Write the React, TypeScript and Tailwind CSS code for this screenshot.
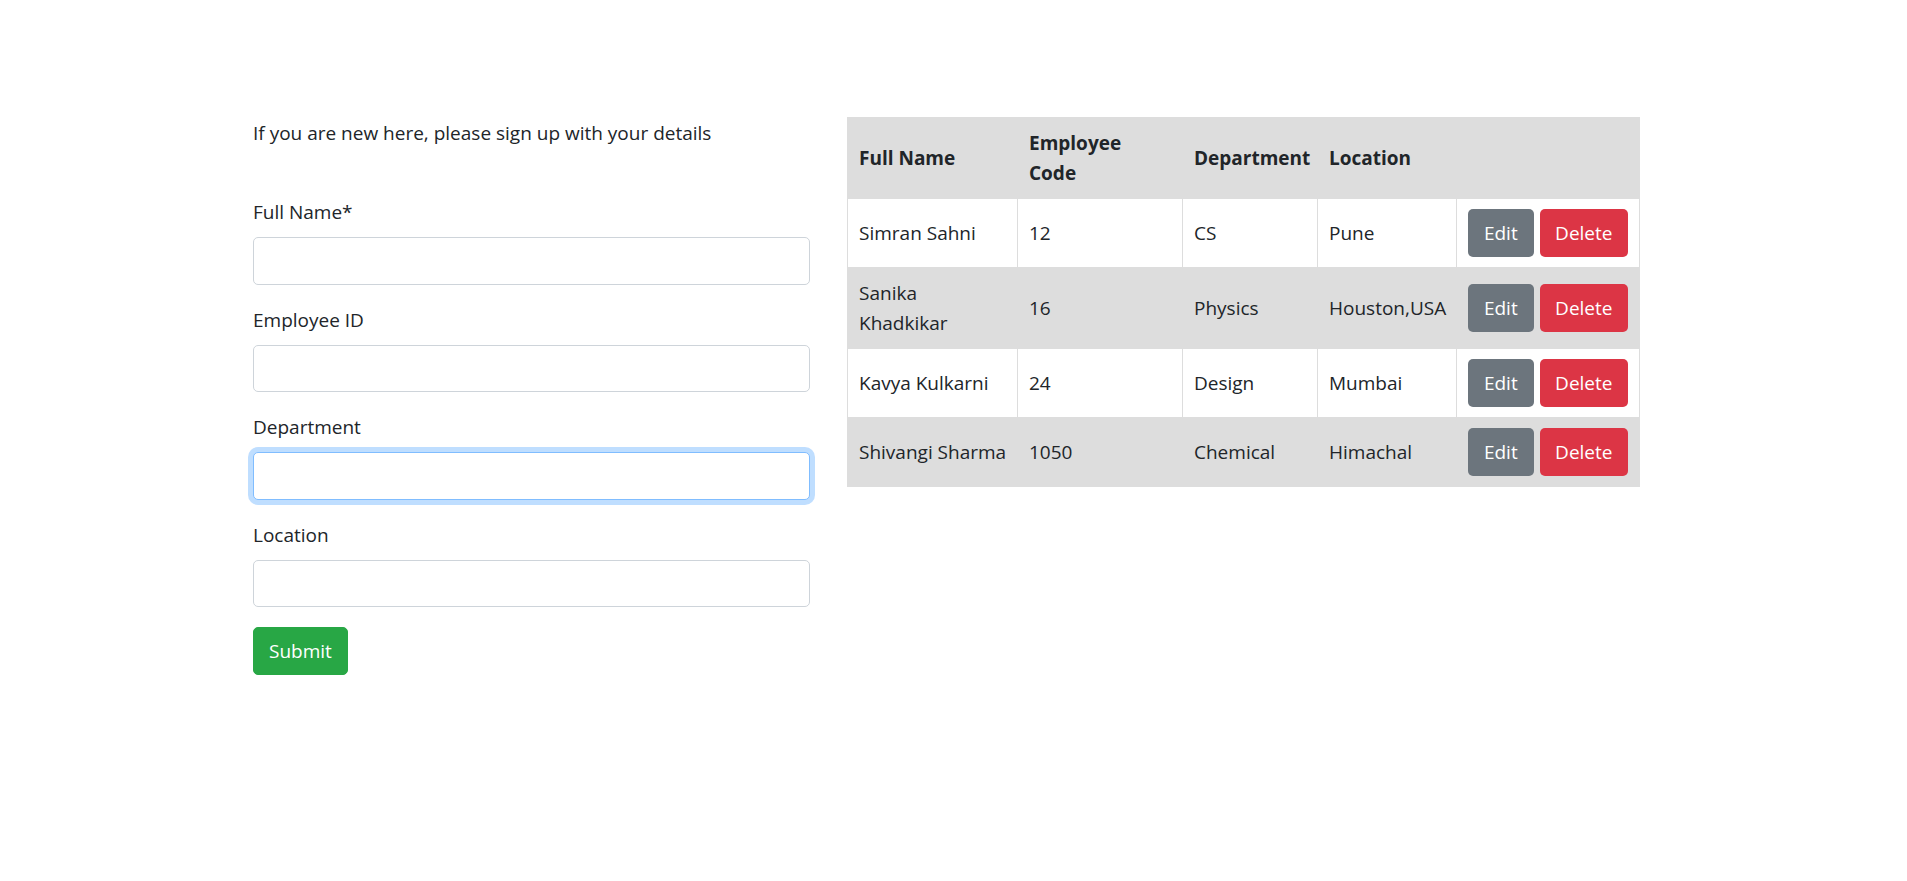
import React from "react";

const rows = [
  { name: "Simran Sahni", code: "12", dept: "CS", loc: "Pune", wrap: false },
  { name: "Sanika Khadkikar", code: "16", dept: "Physics", loc: "Houston,USA", wrap: true },
  { name: "Kavya Kulkarni", code: "24", dept: "Design", loc: "Mumbai", wrap: false },
  { name: "Shivangi Sharma", code: "1050", dept: "Chemical", loc: "Himachal", wrap: false },
];

function Field({ label, focused }: { label: string; focused?: boolean }) {
  return (
    <div className="mb-[20px]">
      <label className="block mb-[10px] leading-[30px]">{label}</label>
      <input
        className={
          focused
            ? "block w-full h-[47.5px] rounded-[5px] border border-[#80bdff] bg-white outline-none shadow-[0_0_0_5px_rgba(0,123,255,0.25)]"
            : "block w-full h-[47.5px] rounded-[5px] border border-[#ced4da] bg-white outline-none"
        }
      />
    </div>
  );
}

const cell = "align-middle px-[11px] py-[10px] border border-[#dddddd]";
const head = "text-left font-bold align-middle px-[11px] py-[10px] border border-[#dddddd]";

export default function App() {
  return (
    <div
      className="min-h-[881px] bg-white text-[#212529] text-[19px] leading-[30px]"
      style={{ fontFamily: '"Open Sans", "Noto Sans", sans-serif' }}
    >
      <div className="flex pt-[118px] pl-[253px] gap-[37px]">
        <div className="w-[557px] shrink-0">
          <p className="mb-[49px]">If you are new here, please sign up with your details</p>
          <Field label="Full Name*" />
          <Field label="Employee ID" />
          <Field label="Department" focused />
          <Field label="Location" />
          <button className="h-[47.5px] px-[15px] rounded-[5px] bg-[#28a745] text-white border border-[#28a745]">
            Submit
          </button>
        </div>
        <div className="w-[792px] shrink-0 -mt-[1px]">
          <table className="w-full table-fixed border-collapse">
            <colgroup>
              <col className="w-[170px]" />
              <col className="w-[165px]" />
              <col className="w-[135px]" />
              <col className="w-[139px]" />
              <col className="w-[183px]" />
            </colgroup>
            <thead>
              <tr className="bg-[#dddddd]">
                <th className={head}>Full Name</th>
                <th className={head}>Employee Code</th>
                <th className={head}>Department</th>
                <th className={head}>Location</th>
                <th className={head}></th>
              </tr>
            </thead>
            <tbody>
              {rows.map((r, i) => (
                <tr key={r.name} className={i % 2 === 1 ? "bg-[#dddddd]" : "bg-white"}>
                  <td className={r.wrap ? cell : cell + " whitespace-nowrap"}>{r.name}</td>
                  <td className={cell}>{r.code}</td>
                  <td className={cell}>{r.dept}</td>
                  <td className={cell + " whitespace-nowrap"}>{r.loc}</td>
                  <td className={cell}>
                    <div className="flex gap-[6px]">
                      <button className="h-[48px] w-[66px] rounded-[5px] bg-[#6c757d] text-white">Edit</button>
                      <button className="h-[48px] w-[89px] rounded-[5px] bg-[#dc3545] text-white">Delete</button>
                    </div>
                  </td>
                </tr>
              ))}
            </tbody>
          </table>
        </div>
      </div>
    </div>
  );
}
